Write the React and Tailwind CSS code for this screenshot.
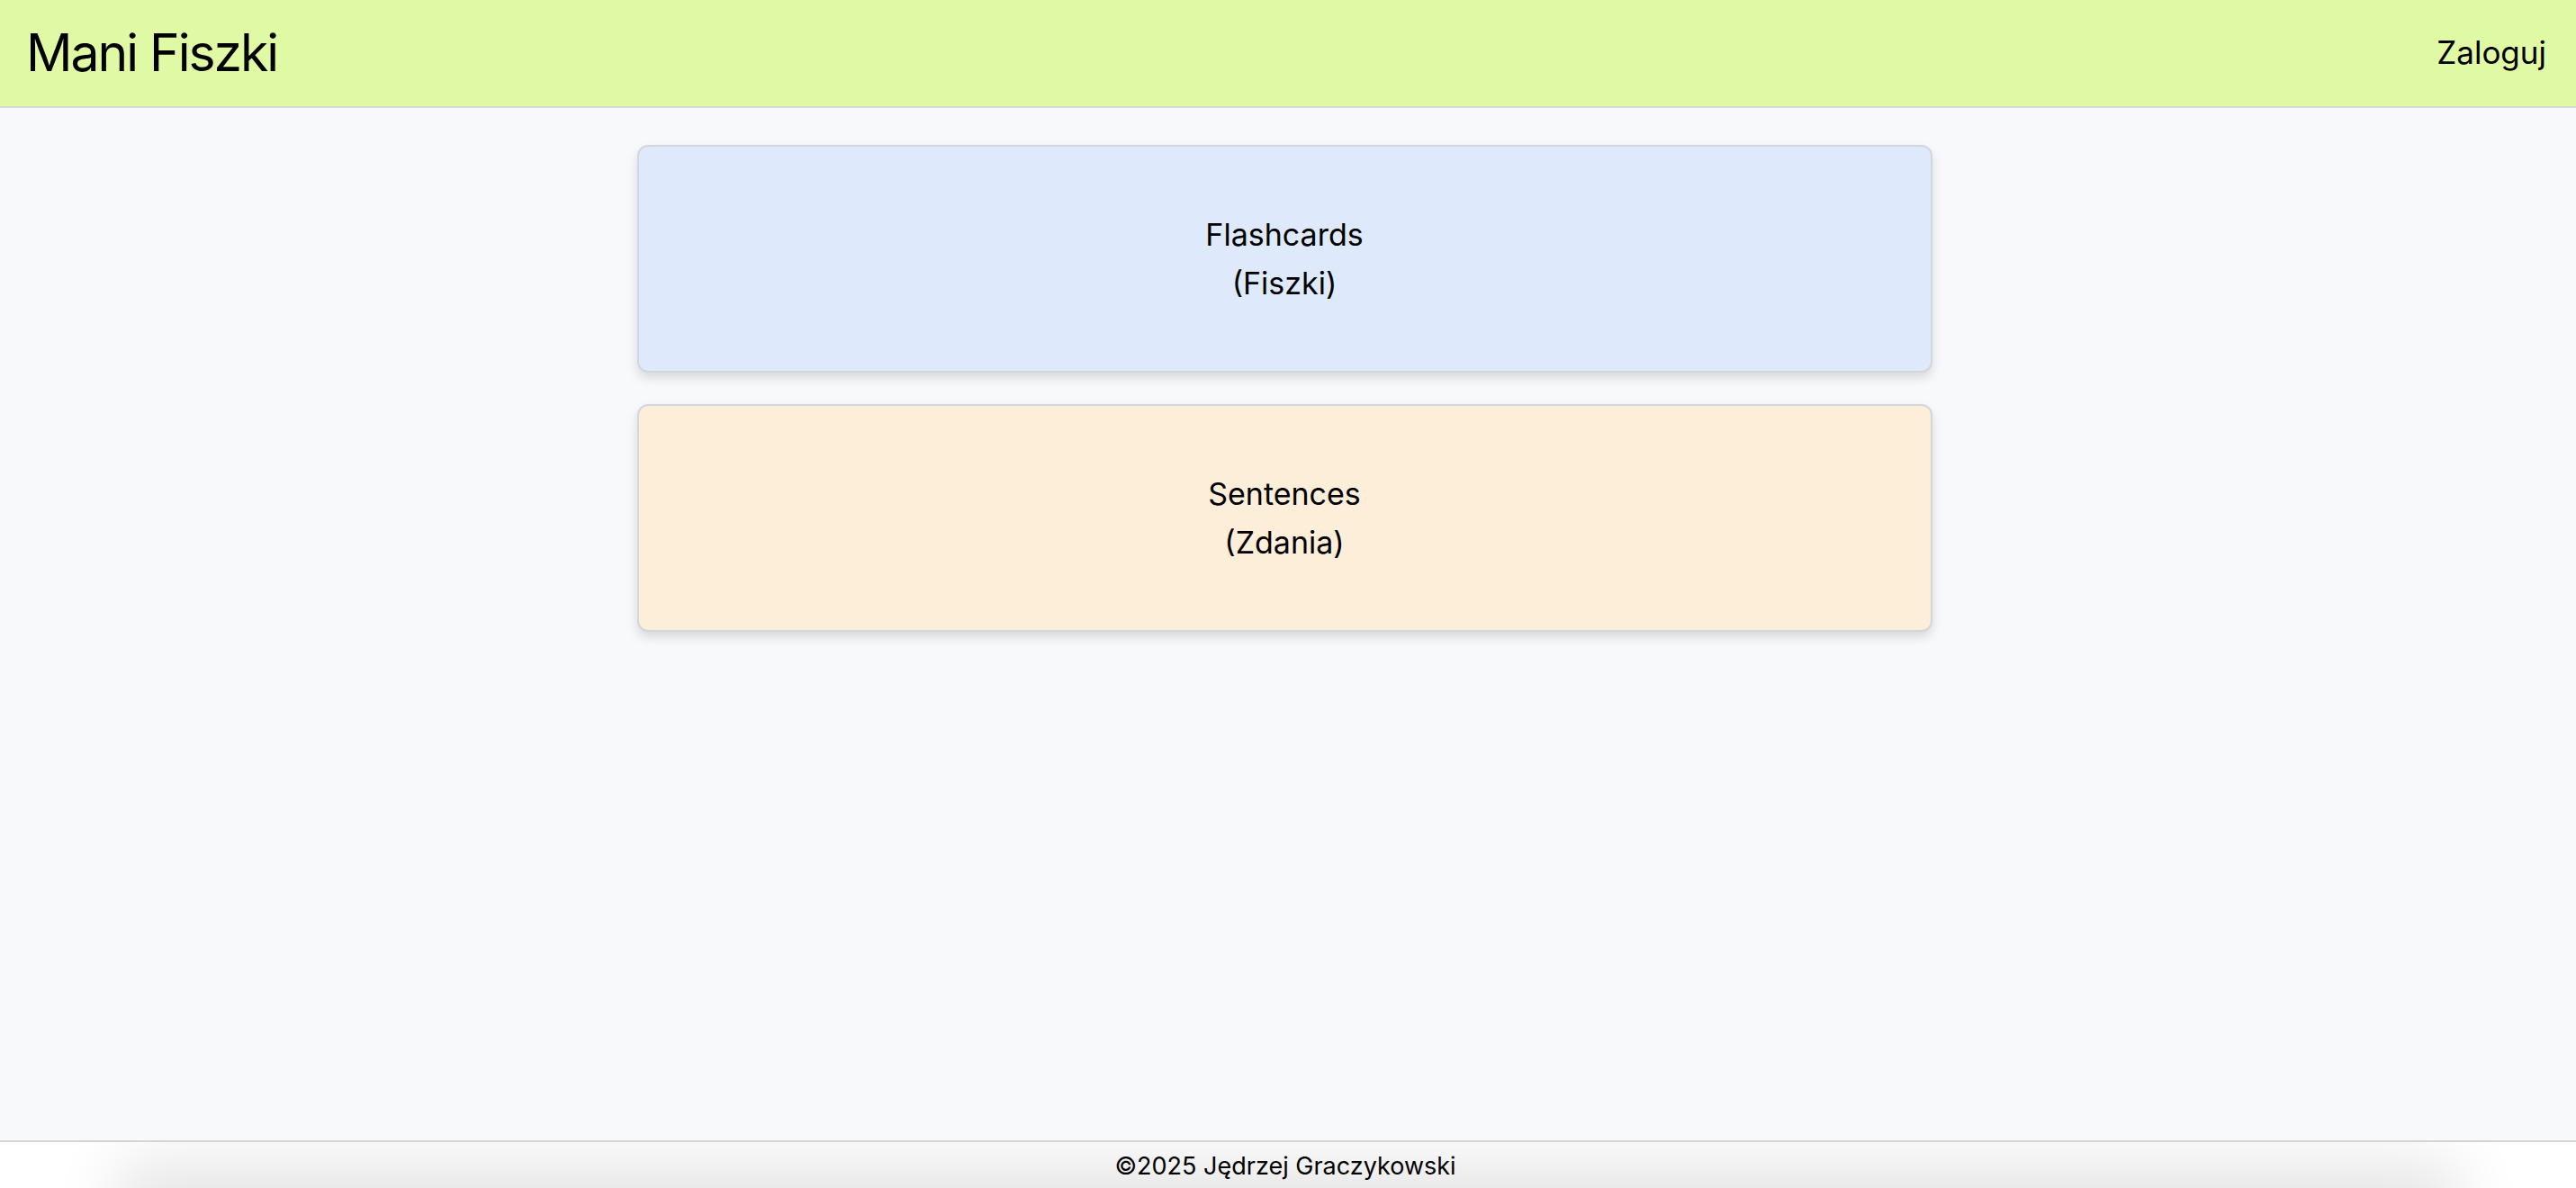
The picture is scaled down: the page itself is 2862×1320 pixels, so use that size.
import React from "react";

function Card({ bg, title, subtitle }) {
  return (
    <div
      className={`${bg} w-[1439px] h-[253px] rounded-[12px] border-2 border-[#d3d6dc] shadow-[0_6px_12px_rgba(0,0,0,0.13)] flex flex-col items-center justify-center text-[34px] leading-[54px] text-black`}
    >
      <div>{title}</div>
      <div>{subtitle}</div>
    </div>
  );
}

export default function App() {
  return (
    <div
      className="h-screen flex flex-col bg-[#f8f9fb] overflow-hidden"
      style={{ fontFamily: "Inter, 'Noto Sans', sans-serif" }}
    >
      <header className="h-[120px] shrink-0 bg-[#e0f9a4] border-b-2 border-[#d4d7dc] flex items-center justify-between px-[29px]">
        <div className="text-[57px] leading-none text-black tracking-[-2px] pb-[2px]">Mani Fiszki</div>
        <div className="text-[35px] leading-none text-black pb-[2px] pr-[4px]">Zaloguj</div>
      </header>
      <main className="flex-1 flex flex-col items-center gap-[35px] pt-[41px] pr-[8px]">
        <Card bg="bg-[#dee9fb]" title="Flashcards" subtitle="(Fiszki)" />
        <Card bg="bg-[#fdeed9]" title="Sentences" subtitle="(Zdania)" />
      </main>
      <footer className="relative h-[53px] shrink-0 bg-white border-t-2 border-[#d1d3d9] overflow-hidden flex items-center justify-center">
        <div className="absolute left-[160px] right-[160px] top-full h-[80px] shadow-[0_0_70px_30px_rgba(0,0,0,0.10)] bg-[#e6e6e6]" />
        <div className="relative text-[27px] leading-none text-black pt-[2px] pr-[6px]">©2025 Jędrzej Graczykowski</div>
      </footer>
    </div>
  );
}
